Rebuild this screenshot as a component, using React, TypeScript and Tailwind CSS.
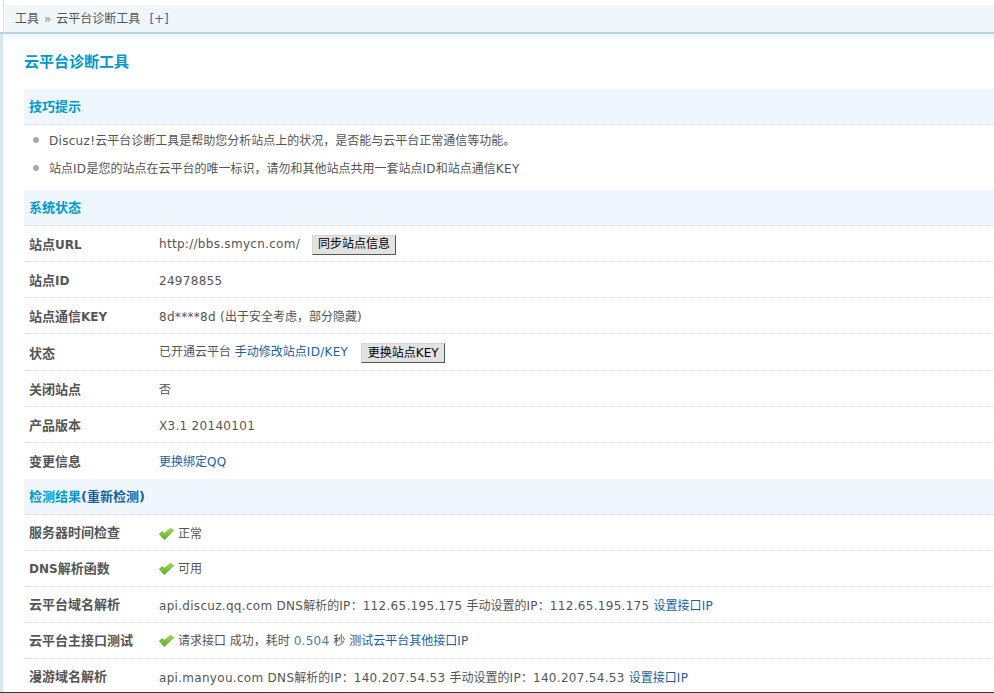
import type { ReactNode } from "react";

const zh = "font-['DejaVu_Sans','Noto_Sans_CJK_SC',sans-serif]";

function M({ t }: { t: string }) {
  return (
    <>
      {t.split(/([\x00-\x7f]+)/).map((p, i) =>
        /[\x00-\x7f]/.test(p) ? (
          <span key={i} className="tracking-[0.3px]">{p}</span>
        ) : (
          <span key={i}>{p}</span>
        )
      )}
    </>
  );
}

function LB({ t }: { t: string }) {
  return (
    <>
      {t.split(/([\x00-\x7f]+)/).map((p, i) =>
        /[\x00-\x7f]/.test(p) ? (
          <span key={i} className="text-[12px]">{p}</span>
        ) : (
          <span key={i}>{p}</span>
        )
      )}
    </>
  );
}

function Check() {
  return (
    <svg width="15" height="12" viewBox="0 0 15 12" className="shrink-0">
      <defs>
        <linearGradient id="chk" x1="0" y1="0" x2="0" y2="1">
          <stop offset="0" stopColor="#a2e445" />
          <stop offset="1" stopColor="#58b01a" />
        </linearGradient>
      </defs>
      <path d="M0.4 6 L3.2 3.6 L5.4 5.6 L11.4 0.4 L14.4 2.4 L5.4 11.6 Z" fill="url(#chk)" stroke="#5d9c3a" strokeWidth="0.7" />
    </svg>
  );
}

function A({ t }: { t: string }) {
  return <a className="text-[#1a5f9f]"><M t={t} /></a>;
}

function Btn({ children }: { children: ReactNode }) {
  return (
    <button className="h-[20px] w-[84px] flex items-center justify-center bg-[#e2e2e2] border border-[#d5d5d5] border-r-[#555] border-b-[#555] text-black text-[12px] leading-[17px]">
      {children}
    </button>
  );
}

function SectionHead({ children }: { children: ReactNode }) {
  return (
    <div className="h-9 shrink-0 flex items-center pl-[5px] bg-[#f0f6fd] border-b border-dotted border-[#c4e6fb] text-[13px] font-bold text-[#0099cc]">
      {children}
    </div>
  );
}

function Label({ t, pad }: { t: string; pad: string }) {
  return (
    <div className={`w-[135px] shrink-0 pl-[5px] text-[13px] font-bold text-[#555] ${pad}`}>
      <LB t={t} />
    </div>
  );
}

function Row({ label, h = 36, pad = "pt-[2px]", flat, children }: { label: string; h?: number; pad?: string; flat?: boolean; children: ReactNode }) {
  return (
    <div style={{ height: h }} className="flex items-center border-b border-dotted border-[#c4e6fb] shrink-0">
      <Label t={label} pad={pad} />
      <div className={`flex items-center whitespace-pre ${flat ? "" : "pt-[2px]"}`}>{children}</div>
    </div>
  );
}

export default function App() {
  return (
    <div className={`h-[693px] w-[994px] overflow-hidden bg-white flex flex-col text-[12px] text-[#555] ${zh}`}>
      <div className="flex-1 min-h-0 flex overflow-hidden">
        <div className="w-[5px] shrink-0 flex flex-col">
          <div className="h-[32px] w-[4px] border-r border-[#d5dfe3]" />
          <div className="h-[2px] bg-[#b5d3e2]" />
          <div className="flex-1 w-[3px] bg-[#d3e8f1]" />
        </div>
        <div className="flex-1 min-w-0 flex flex-col">
          <div className="mt-[5px] h-[29px] shrink-0 bg-[#f0f7fb] border-b-2 border-[#b5d3e2] flex items-center pl-[10px] text-[#555] whitespace-pre">
            <span>工具</span>
            <span className="text-[#8a8a8a] mx-[5px]">»</span>
            <span>云平台诊断工具</span>
            <span className="ml-[9px] text-[#3a62ad]">[+]</span>
          </div>
          <div className="h-[9px] shrink-0 bg-gradient-to-b from-[#eef7fb] to-white" />
          <div className="pl-[19px] flex-1 flex flex-col">
            <h3 className="h-[46px] shrink-0 text-[15px] font-bold text-[#0099cc] leading-[20px] pt-[9px]">云平台诊断工具</h3>
            <SectionHead>技巧提示</SectionHead>
            <ul className="shrink-0 h-[65px] pt-[2px]">
              <li className="h-[28px] flex items-center pl-[9px] whitespace-pre">
                <span className="w-[6px] h-[6px] rounded-full bg-[#aaa] mr-[10px] mb-[2px]" />
                <span><M t="Discuz!云平台诊断工具是帮助您分析站点上的状况，是否能与云平台正常通信等功能。" /></span>
              </li>
              <li className="h-[28px] flex items-center pl-[9px] whitespace-pre">
                <span className="w-[6px] h-[6px] rounded-full bg-[#aaa] mr-[10px] mb-[2px]" />
                <span><M t="站点ID是您的站点在云平台的唯一标识，请勿和其他站点共用一套站点ID和站点通信KEY" /></span>
              </li>
            </ul>
            <SectionHead>系统状态</SectionHead>
            <Row label="站点URL" flat>
              <M t="http://bbs.smycn.com/" />
              <span className="ml-3 pt-[2px]"><Btn>同步站点信息</Btn></span>
            </Row>
            <Row label="站点ID"><M t="24978855" /></Row>
            <Row label="站点通信KEY"><M t="8d****8d (出于安全考虑，部分隐藏)" /></Row>
            <Row label="状态" h={37} pad="pt-[4px]" flat>
              <span>已开通云平台 </span>
              <A t="手动修改站点ID/KEY" />
              <span className="ml-[13px] pt-[2px]"><Btn>更换站点KEY</Btn></span>
            </Row>
            <Row label="关闭站点">否</Row>
            <Row label="产品版本"><M t="X3.1 20140101" /></Row>
            <div className="h-9 flex items-center shrink-0">
              <Label t="变更信息" pad="pt-[2px]" />
              <div className="pt-[2px]"><A t="更换绑定QQ" /></div>
            </div>
            <SectionHead>
              <span>检测结果</span>
              <span className="text-[#1a5f9f]">(重新检测)</span>
            </SectionHead>
            <Row label="服务器时间检查" pad="pt-0"><Check /><span className="ml-[4px]">正常</span></Row>
            <Row label="DNS解析函数" pad="pt-0" flat><Check /><span className="ml-[4px]">可用</span></Row>
            <Row label="云平台域名解析" pad="pt-0">
              <M t="api.discuz.qq.com DNS解析的IP：112.65.195.175 手动设置的IP：112.65.195.175 " />
              <A t="设置接口IP" />
            </Row>
            <Row label="云平台主接口测试" pad="pt-0" flat>
              <Check />
              <span className="ml-[4px]">请求接口 成功，耗时 </span>
              <span className="text-[#4a7d9f] tracking-[0.3px]">0.504</span>
              <span> 秒 </span>
              <A t="测试云平台其他接口IP" />
            </Row>
            <Row label="漫游域名解析" pad="pt-0">
              <M t="api.manyou.com DNS解析的IP：140.207.54.53 手动设置的IP：140.207.54.53 " />
              <A t="设置接口IP" />
            </Row>
          </div>
        </div>
      </div>
      <div className="h-px shrink-0 bg-[#333]" />
    </div>
  );
}
